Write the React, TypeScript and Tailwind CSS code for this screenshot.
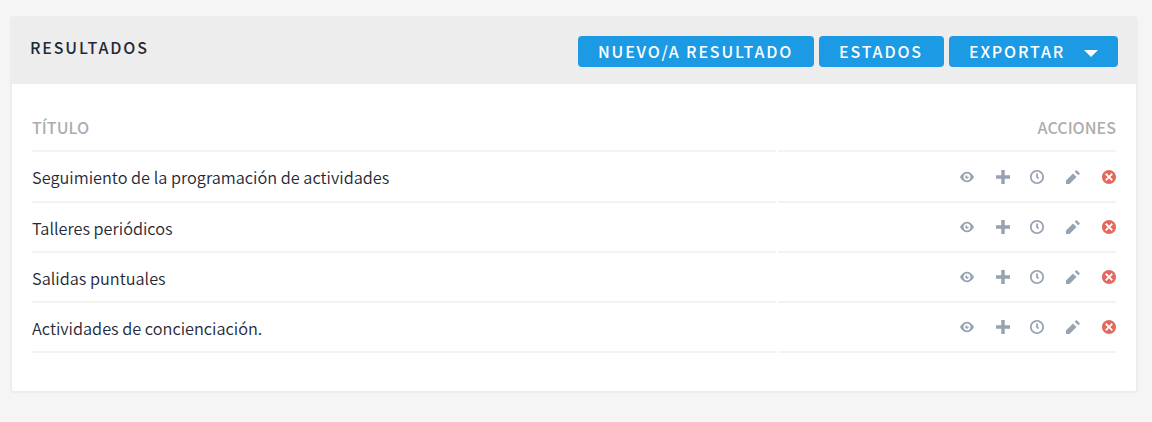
const titles = [
  'Seguimiento de la programación de actividades',
  'Talleres periódicos',
  'Salidas puntuales',
  'Actividades de concienciación.',
];

const EYE =
  'M4.03 1c-2.53 0-4.03 3-4.03 3s1.5 3 4.03 3c2.47 0 3.97-3 3.97-3s-1.5-3-3.97-3zm-.03 1c1.11 0 2 .9 2 2 0 1.11-.89 2-2 2-1.1 0-2-.89-2-2 0-1.1.9-2 2-2zm0 1c-.55 0-1 .45-1 1s.45 1 1 1 1-.45 1-1c0-.1-.04-.19-.06-.28-.08.16-.24.28-.44.28-.28 0-.5-.22-.5-.5 0-.2.12-.36.28-.44-.09-.03-.18-.06-.28-.06z';
const PLUS = 'M3 0v3h-3v2h3v3h2v-3h3v-2h-3v-3h-2z';
const CLOCK =
  'M4 0c-2.2 0-4 1.8-4 4s1.8 4 4 4 4-1.8 4-4-1.8-4-4-4zm0 1c1.66 0 3 1.34 3 3s-1.34 3-3 3-3-1.34-3-3 1.34-3 3-3zm-.5 1v2.22l.16.13.5.5.34.38.72-.72-.38-.34-.34-.34v-1.81h-1z';
const PENCIL = 'M6 0l-1 1 2 2 1-1-2-2zm-2 2l-4 4v2h2l4-4-2-2z';
const CIRCLE_X =
  'M4 0c-2.2 0-4 1.8-4 4s1.8 4 4 4 4-1.8 4-4-1.8-4-4-4zm-1.5 1.78l1.5 1.5 1.5-1.5.72.72-1.5 1.5 1.5 1.5-.72.72-1.5-1.5-1.5 1.5-.72-.72 1.5-1.5-1.5-1.5.72-.72z';

function Icon({ d, className = '' }: { d: string; className?: string }) {
  return (
    <svg viewBox="0 0 8 8" className={`size-[14px] fill-current ${className}`}>
      <path d={d} />
    </svg>
  );
}

const button =
  'flex h-[31px] items-center rounded-[4px] bg-[#1c9be4] pl-5 text-[16px] leading-[31px] font-medium tracking-[1.85px] whitespace-nowrap text-white';

export default function App() {
  return (
    <div className="h-[422px] bg-[#f5f5f5] px-[10px] pt-4 pr-[14px] font-['Noto_Sans_CJK_SC','Source_Sans_Pro',sans-serif] text-[#1f2937]">
      <div className="h-[377px] overflow-hidden rounded-[4px] border-2 border-[#ededed] bg-white">
        <div className="flex h-[66px] items-start justify-between bg-[#ededed] pt-[18px] pr-[18px] pl-[18px]">
          <h2 className="-mt-px text-[16px] leading-6 font-medium tracking-[1.85px]">RESULTADOS</h2>
          <div className="flex gap-[5px]">
            <button className={`${button} w-[236px]`}>NUEVO/A RESULTADO</button>
            <button className={`${button} w-[125px]`}>ESTADOS</button>
            <button className={`${button} w-[169px] justify-between pr-5`}>
              EXPORTAR
              <svg viewBox="0 0 14 7" className="mt-1 h-[7px] w-[14px] fill-white">
                <path d="M0 0h14L7 7z" />
              </svg>
            </button>
          </div>
        </div>
        <div className="px-5 pt-[18px]">
          <div className="grid h-[50px] grid-cols-[744px_338px] grid-rows-[50px] gap-x-[2px] text-[16.1px] leading-[51px] font-medium text-[#adadad]">
            <div className="border-b-2 border-[#f3f3f3]">TÍTULO</div>
            <div className="border-b-2 border-[#f3f3f3] text-right">ACCIONES</div>
          </div>
          {titles.map((title) => (
            <div
              key={title}
              className="grid grid-cols-[744px_338px] grid-rows-[50.15px] gap-x-[2px] first-of-type:grid-rows-[50px] nth-2:grid-rows-[50.6px]"
            >
              <div className="border-b-2 border-[#f3f3f3] text-[16.31px] leading-[51.5px] font-[350]">{title}</div>
              <div className="flex justify-end border-b-2 border-[#f3f3f3] pt-[17.55px] text-[#98a3b2]">
                <Icon d={EYE} className="mr-[22px]" />
                <Icon d={PLUS} className="mr-5" />
                <Icon d={CLOCK} className="mr-[22px]" />
                <Icon d={PENCIL} className="mr-[22px]" />
                <Icon d={CIRCLE_X} className="text-[#e2695e]" />
              </div>
            </div>
          ))}
        </div>
      </div>
    </div>
  );
}
